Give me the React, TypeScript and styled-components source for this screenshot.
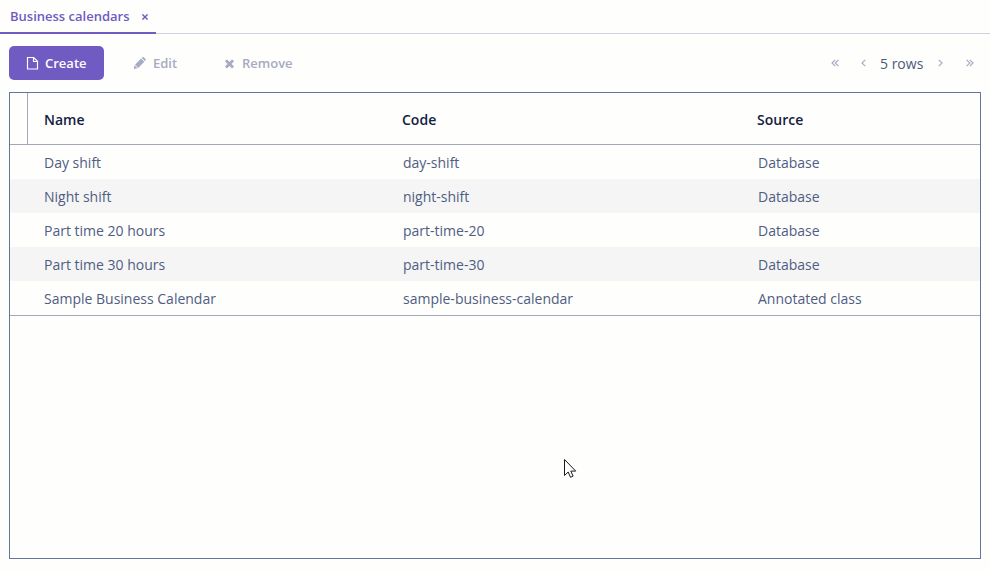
import React from 'react';
import styled, { createGlobalStyle } from 'styled-components';

const GlobalStyle = createGlobalStyle`
  * { box-sizing: border-box; }
  html, body { margin: 0; background: #fefefd; overflow: hidden; }
  body { font-family: 'Open Sans', sans-serif; font-size: 14px; color: #4f5d82; }
  button { font: inherit; }
`;

const Page = styled.main`
  position: relative;
  width: 990px;
  height: 570px;
  display: flex;
  flex-direction: column;
`;

const TabBar = styled.nav`
  display: flex;
  height: 34px;
  flex: none;
  box-shadow: inset 0 -1px #d1d0df;
`;

const Tab = styled.div`
  display: flex;
  align-items: center;
  justify-content: space-between;
  width: 156px;
  padding: 0 8px 0 10px;
  border-bottom: 2px solid #705bc2;
  color: #705bc2;
  font-size: 13px;
  font-weight: 600;
  line-height: 32px;
  white-space: nowrap;
`;

const CloseButton = styled.button`
  display: flex;
  padding: 2px 0 0;
  border: 0;
  background: none;
  color: inherit;
`;

const Toolbar = styled.div`
  display: flex;
  align-items: center;
  flex: none;
  height: 58px;
  padding: 0 9px;
`;

const ActionButton = styled.button<{ $primary?: boolean; $width: number }>`
  display: flex;
  align-items: center;
  width: ${p => p.$width}px;
  height: 34px;
  padding: 0 0 0 ${p => (p.$primary ? 17 : 29)}px;
  gap: ${p => (p.$primary ? 5 : 6)}px;
  border: 0;
  border-radius: 5px;
  background: ${p => (p.$primary ? '#705bc2' : 'none')};
  color: ${p => (p.$primary ? '#fdfdfd' : '#a6abc2')};
  font-size: 13px;
  font-weight: 600;
  line-height: 34px;
  white-space: nowrap;
`;

const Pager = styled.div`
  display: flex;
  align-items: center;
  margin-left: auto;
  padding-right: 7px;
  color: #a9acc4;
`;

const PageButton = styled.button<{ $gap?: number }>`
  display: flex;
  padding: 0;
  margin: 0 0 1px ${p => p.$gap ?? 0}px;
  border: 0;
  background: none;
  color: inherit;
`;

const RowCount = styled.span`
  width: 43px;
  margin-left: 14px;
  color: #4f5978;
  line-height: 20px;
  padding-top: 1px;
  white-space: nowrap;
`;

const TablePanel = styled.section`
  width: 972px;
  height: 467px;
  margin-left: 9px;
  border: 1px solid #65759b;
`;

const Row = styled.div<{ $striped?: boolean }>`
  display: grid;
  grid-template-columns: 18px 359px 355px 1fr;
  grid-template-rows: 100%;
  height: 34px;
  line-height: 35px;
  background: ${p => (p.$striped ? '#f5f5f5' : 'transparent')};
`;

const HeaderRow = styled(Row)`
  height: 52px;
  border-bottom: 1px solid #a4a7b9;
  background: none;
  color: #14213f;
  font-weight: 600;
  line-height: 53px;
`;

const Corner = styled.span`
  border-right: 1px solid #a4a7b9;
`;

const Body = styled.div`
  border-bottom: 1px solid #a4a7b9;
`;

const Cell = styled.span<{ $indent?: number }>`
  padding-left: ${p => p.$indent ?? 16}px;
  white-space: nowrap;
`;

const Cursor = styled.svg`
  position: absolute;
  left: 563px;
  top: 458px;
`;

const FileIcon = () => (
  <svg width="14" height="14" viewBox="0 0 14 14" fill="none" stroke="currentColor" strokeWidth="1.2">
    <path d="M1.5 1.5h6.2l3.8 3.8v7.7H1.5z M7.5 1.5v4h4" />
  </svg>
);

const PencilIcon = () => (
  <svg width="14" height="14" viewBox="0 0 14 14" fill="currentColor">
    <path d="M.8 13l.7-3.7 3 3zM2 8.7l6.1-6.2 3.2 3.2-6.1 6.2zM8.7 1.9l.7-.7q.7-.5 1.4.1l1.7 1.7q.6.7.1 1.4l-.7.7z" />
  </svg>
);

const RemoveIcon = () => (
  <svg width="13" height="13" viewBox="0 0 1792 1792" fill="currentColor">
    <path d="M1490 1322q0 40-28 68l-136 136q-28 28-68 28t-68-28l-294-294-294 294q-28 28-68 28t-68-28l-136-136q-28-28-28-68t28-68l294-294-294-294q-28-28-28-68t28-68l136-136q28-28 68-28t68 28l294 294 294-294q28-28 68-28t68 28l136 136q28 28 28 68t-28 68l-294 294 294 294q28 28 28 68z" />
  </svg>
);

const CloseIcon = () => (
  <svg width="6" height="6" viewBox="0 0 6 6" stroke="currentColor" strokeWidth="1.4">
    <path d="M.4.4l5.2 5.2M5.6.4L.4 5.6" />
  </svg>
);

const Angle = ({ double, next }: { double?: boolean; next?: boolean }) => {
  const width = double ? 8 : 5;
  return (
    <svg width={width} height="8" viewBox={`0 0 ${width} 8`} fill="none" stroke="currentColor" strokeWidth="1.2">
      <g transform={next ? `translate(${width} 0) scale(-1 1)` : undefined}>
        <path d="M4.2.8L1 4l3.2 3.2" />
        {double && <path d="M7.4.8L4.2 4l3.2 3.2" />}
      </g>
    </svg>
  );
};

const calendars = [
  { name: 'Day shift', code: 'day-shift', source: 'Database' },
  { name: 'Night shift', code: 'night-shift', source: 'Database' },
  { name: 'Part time 20 hours', code: 'part-time-20', source: 'Database' },
  { name: 'Part time 30 hours', code: 'part-time-30', source: 'Database' },
  { name: 'Sample Business Calendar', code: 'sample-business-calendar', source: 'Annotated class' },
];

export default function App() {
  return (
    <Page>
      <GlobalStyle />
      <TabBar>
        <Tab>
          Business calendars
          <CloseButton aria-label="Close"><CloseIcon /></CloseButton>
        </Tab>
      </TabBar>
      <Toolbar>
        <ActionButton $primary $width={95}><FileIcon />Create</ActionButton>
        <ActionButton $width={90}><PencilIcon />Edit</ActionButton>
        <ActionButton $width={110}><RemoveIcon />Remove</ActionButton>
        <Pager>
          <PageButton aria-label="First page"><Angle double /></PageButton>
          <PageButton aria-label="Previous page" $gap={22}><Angle /></PageButton>
          <RowCount>5 rows</RowCount>
          <PageButton aria-label="Next page" $gap={15}><Angle next /></PageButton>
          <PageButton aria-label="Last page" $gap={23}><Angle double next /></PageButton>
        </Pager>
      </Toolbar>
      <TablePanel>
        <HeaderRow>
          <Corner />
          <Cell>Name</Cell>
          <Cell $indent={15}>Code</Cell>
          <Cell $indent={15}>Source</Cell>
        </HeaderRow>
        <Body>
          {calendars.map((item, index) => (
            <Row key={item.code} $striped={index % 2 === 1}>
              <span />
              <Cell>{item.name}</Cell>
              <Cell>{item.code}</Cell>
              <Cell>{item.source}</Cell>
            </Row>
          ))}
        </Body>
      </TablePanel>
      <Cursor width="14" height="22" viewBox="0 0 14 22" fill="#fff" stroke="#17171f">
        <path d="M1.5 1.5v16l3.7-3.5 2.3 5.3 2.6-1.2-2.3-5h4.9z" />
      </Cursor>
    </Page>
  );
}
